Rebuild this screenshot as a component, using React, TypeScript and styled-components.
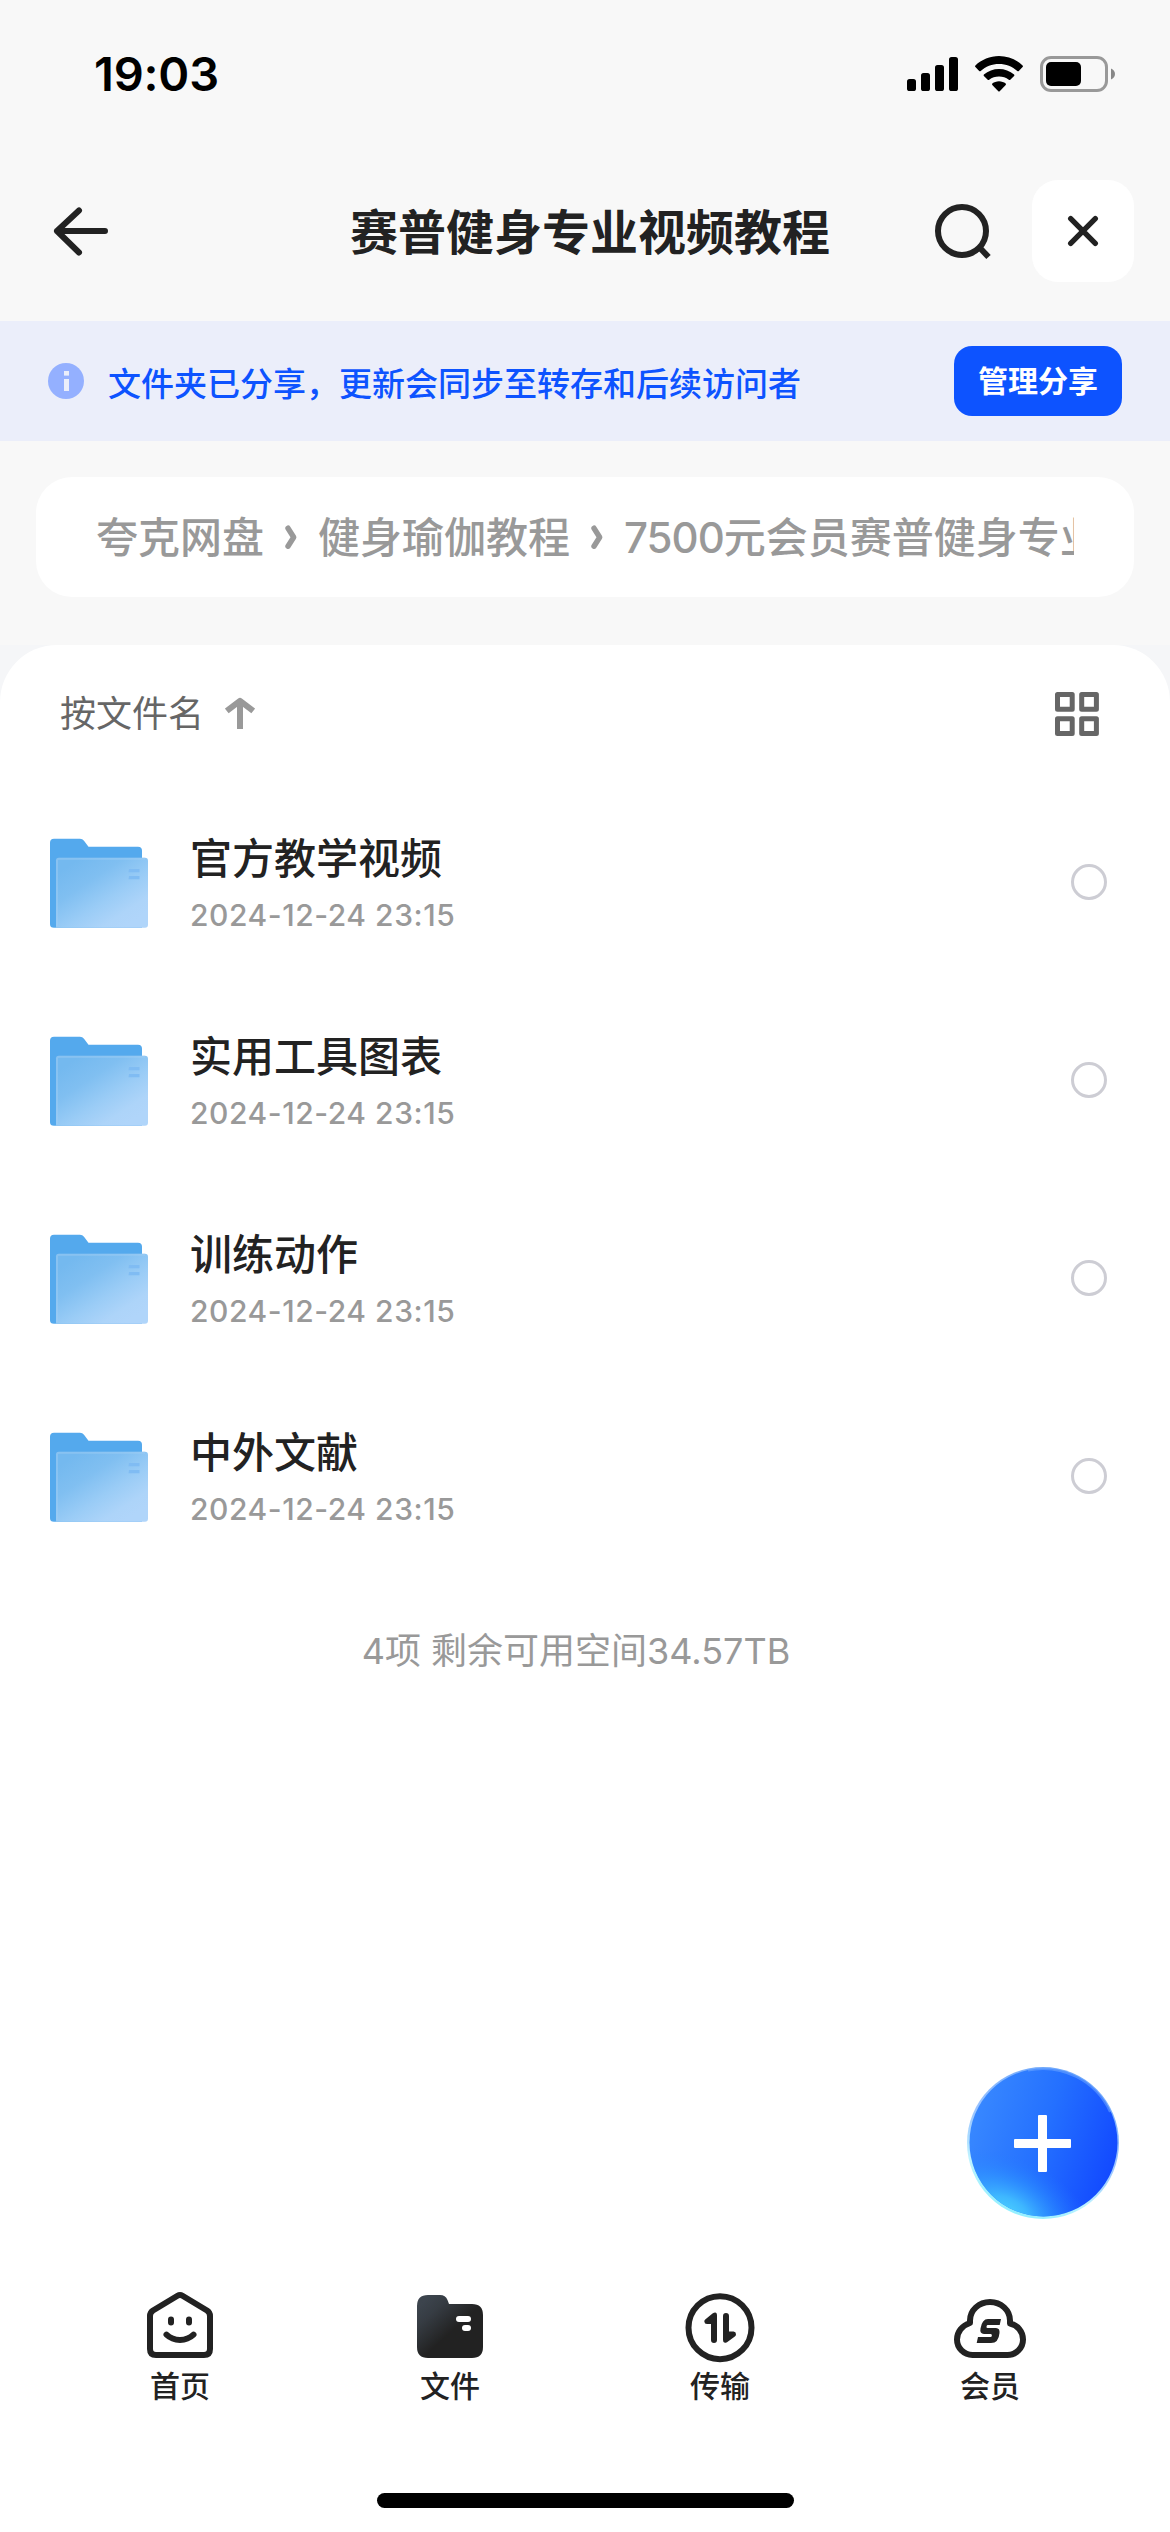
import React from "react";
import styled, { createGlobalStyle } from "styled-components";

const GlobalStyle = createGlobalStyle`
  html, body { margin: 0; padding: 0; background: #fff; }
  * { box-sizing: border-box; }
  button { border: 0; padding: 0; background: none; font: inherit; color: inherit; }
  svg { display: block; flex: none; }
`;

const Screen = styled.div`
  position: relative;
  display: flex;
  flex-direction: column;
  width: 1170px;
  height: 2532px;
  overflow: hidden;
  background: #f8f8f8;
  color: #222;
  font-family: Inter, "Noto Sans CJK SC", sans-serif;
`;

const StatusBar = styled.div`
  display: flex;
  align-items: center;
  height: 141px;
  padding: 7px 54px 0 94px;
`;

const Clock = styled.div`
  flex: 1;
  font-size: 47px;
  line-height: 60px;
  font-weight: 600;
  letter-spacing: -0.2px;
  color: #000;
`;

const Header = styled.header`
  display: flex;
  align-items: center;
  height: 180px;
  padding: 0 36px 0 51px;
`;

const Title = styled.h1`
  flex: 1;
  margin: 0;
  padding: 3px 0 0 239px;
  font-size: 48px;
  line-height: 60px;
  font-weight: 700;
  white-space: nowrap;
`;

const IconButton = styled.button`
  display: flex;
  align-items: center;
  justify-content: center;
  width: 60px;
  height: 60px;
`;

const CloseButton = styled(IconButton)`
  width: 102px;
  height: 102px;
  margin-left: 39px;
  border-radius: 26px;
  background: #fff;
`;

const Notice = styled.div`
  display: flex;
  align-items: center;
  height: 120px;
  padding: 0 48px;
  background: #ebeefa;
`;

const NoticeText = styled.div`
  flex: 1;
  margin-left: 24px;
  padding-top: 5px;
  color: #0d53ff;
  font-size: 33px;
  line-height: 44px;
  font-weight: 500;
`;

const ManageButton = styled.button`
  width: 168px;
  height: 70px;
  padding-top: 1px;
  border-radius: 18px;
  background: #0d53ff;
  color: #fff;
  font-size: 30px;
  line-height: 69px;
  font-weight: 700;
`;

const Crumbs = styled.nav`
  display: flex;
  align-items: center;
  height: 120px;
  margin: 36px 36px 48px;
  padding: 0 60px;
  border-radius: 36px;
  background: #fff;
`;

const CrumbTrack = styled.div`
  display: flex;
  align-items: center;
  flex: 1;
  overflow: hidden;
  color: #999;
  font-size: 42px;
  line-height: 60px;
  font-weight: 500;
  white-space: nowrap;
`;

const Crumb = styled.span`
  flex: none;
  padding-top: 2px;
`;

const Digits = styled.span`
  letter-spacing: -1px;
`;

const CrumbArrow = styled.svg`
  margin: 0 18px;
`;

const SheetBackdrop = styled.div`
  display: flex;
  flex: 1;
  background: #f5f6f8;
`;

const Sheet = styled.main`
  display: flex;
  flex-direction: column;
  flex: 1;
  border-radius: 57px 57px 0 0;
  background: #fff;
`;

const SortBar = styled.div`
  display: flex;
  align-items: center;
  height: 138px;
  padding: 0 71px 0 60px;
`;

const SortLabel = styled.span`
  color: #666;
  font-size: 36px;
  line-height: 48px;
  font-weight: 400;
`;

const SortArrow = styled.svg`
  margin: 0 auto 0 21px;
`;

const FileRow = styled.div`
  display: flex;
  align-items: center;
  height: 198px;
  padding: 0 63px 0 48px;
`;

const FileInfo = styled.div`
  display: flex;
  flex-direction: column;
  flex: 1;
  margin-left: 40px;
`;

const FileName = styled.div`
  padding-top: 1px;
  font-size: 42px;
  line-height: 56px;
  font-weight: 500;
`;

const FileDate = styled.div`
  color: #999;
  font-size: 30px;
  line-height: 40px;
  margin-top: 8px;
  letter-spacing: 0.55px;
  font-weight: 450;
`;

const Radio = styled.span`
  width: 36px;
  height: 36px;
  border: 3px solid #cdcdd4;
  border-radius: 50%;
`;

const Summary = styled.div`
  margin-top: 52px;
  padding-right: 18px;
  text-align: center;
  color: #999;
  font-size: 36px;
  line-height: 48px;
`;

const TabBar = styled.nav`
  display: flex;
  margin-top: auto;
  padding: 0 45px;
  height: 209px;
`;

const Tab = styled.button`
  display: flex;
  flex-direction: column;
  align-items: center;
  justify-content: flex-start;
  width: 270px;
  height: 122px;
  font-size: 30px;
  line-height: 40px;
  font-weight: 500;
`;

const TabLabel = styled.span`
  margin-top: 2px;
`;

const HomeIndicator = styled.div`
  width: 417px;
  height: 15px;
  margin: 0 auto 24px;
  border-radius: 8px;
  background: #000;
`;

const AddButton = styled.button`
  position: absolute;
  left: 966px;
  top: 2066px;
  width: 154px;
  height: 154px;
`;

const Signal = () => (
  <svg width="51" height="36" viewBox="0 0 51 36">
    <rect x="0" y="23" width="9" height="12" rx="2.6" />
    <rect x="14" y="17" width="9" height="18" rx="2.6" />
    <rect x="28" y="9" width="9" height="26" rx="2.6" />
    <rect x="42" y="1" width="9" height="34" rx="2.6" />
  </svg>
);

const WifiGlyph = styled.svg`
  margin: 0 17px;
`;

const Wifi = () => (
  <WifiGlyph width="48" height="36" viewBox="0 0 48 36">
    <path d="M24 0C33 0 41.500 3.600 47.600 9.400Q48.300 10.200 47.600 11L43.800 15Q43.100 15.600 42.300 15C37.400 10.500 31 8 24 8S10.600 10.500 5.700 15Q4.900 15.600 4.200 15L.4 11Q-.3 10.200 .4 9.400C6.500 3.600 15 0 24 0Z" />
    <path d="M24 13C29.600 13 35 15 39.100 18.600Q39.800 19.300 39.100 20L35.300 23.800Q34.600 24.400 33.800 23.800C31.100 21.600 27.700 20.500 24 20.500S16.900 21.600 14.200 23.800Q13.400 24.400 12.700 23.800L8.900 20Q8.200 19.300 8.900 18.600C13 15 18.400 13 24 13Z" />
    <path d="M24 25.300C26.600 25.300 28.900 26.200 30.700 27.600Q31.300 28.300 30.700 29L24.700 35.200Q24 35.900 23.300 35.200L17.300 29Q16.700 28.300 17.300 27.600C19.100 26.200 21.400 25.300 24 25.300Z" />
  </WifiGlyph>
);

const Battery = () => (
  <svg width="76" height="36" viewBox="0 0 76 36">
    <rect x="1.500" y="1.500" width="65" height="33" rx="9.500" fill="none" stroke="#999" strokeWidth="3" />
    <rect x="6" y="6" width="35" height="24" rx="5" />
    <path d="M71 12.500C73.500 13.500 75 15.500 75 18S73.500 22.500 71 23.500Z" fill="#888" />
  </svg>
);

const BackIcon = () => (
  <svg width="60" height="60" viewBox="0 0 60 60" fill="none" stroke="#222" strokeWidth="6" strokeLinecap="round" strokeLinejoin="round">
    <path d="M28 9.500L6 30L28 51.500M6 30H54" />
  </svg>
);

const SearchIcon = () => (
  <svg width="60" height="60" viewBox="0 0 60 60" fill="none" stroke="#222" strokeWidth="6">
    <circle cx="29" cy="30" r="24" />
    <path d="M47 47L55.500 56" />
  </svg>
);

const CloseIcon = () => (
  <svg width="36" height="36" viewBox="0 0 36 36" fill="none" stroke="#222" strokeWidth="5.400" strokeLinecap="round">
    <path d="M5.700 5.700L30.300 30.300M30.300 5.700L5.700 30.300" />
  </svg>
);

const InfoIcon = () => (
  <svg width="36" height="36" viewBox="0 0 36 36">
    <circle cx="18" cy="18" r="18" fill="#94b0ff" />
    <rect x="16" y="8" width="5" height="4.600" fill="#ebeefa" />
    <rect x="16" y="16" width="5" height="12" fill="#ebeefa" />
  </svg>
);

const ChevronIcon = () => (
  <CrumbArrow width="18" height="26" viewBox="0 0 18 26" fill="none" stroke="#999" strokeWidth="5.400" strokeLinecap="round" strokeLinejoin="round">
    <path d="M6 4.200L11.700 13.200L6 22.200" />
  </CrumbArrow>
);

const SortIcon = () => (
  <SortArrow width="30" height="34" viewBox="0 0 30 34" fill="none" stroke="#999" strokeWidth="6" strokeLinejoin="round">
    <path d="M1.800 14L15 3.800L28.200 14M15 4V32" />
  </SortArrow>
);

const GridIcon = () => (
  <svg width="44" height="44" viewBox="0 0 44 44" fill="none" stroke="#666" strokeWidth="5" strokeLinejoin="round">
    <path d="M2.500 2.500H17.200V17.200H2.500ZM26.700 2.500H41.400V17.200H26.700ZM2.500 26.700H17.200V41.400H2.500ZM26.700 26.700H41.400V41.400H26.700Z" />
  </svg>
);

const FolderIcon = () => (
  <svg width="102" height="94" viewBox="0 -1.200 102 94">
    <defs>
      <linearGradient id="folderFront" x1=".15" y1=".1" x2=".85" y2=".9">
        <stop offset="0" stopColor="#74b9ef" />
        <stop offset=".3" stopColor="#80bff1" />
        <stop offset=".6" stopColor="#9accf6" />
        <stop offset=".85" stopColor="#add4f9" />
        <stop offset="1" stopColor="#b0d5fa" />
      </linearGradient>
    </defs>
    <path d="M2 6.500Q2 2.500 6 2.500H32Q34.500 2.500 36 4.500L40.500 10.500H90Q94 10.500 94 14.500V91.500H6Q2 91.500 2 88Z" fill="#54a9ed" />
    <path d="M8 24Q8 21.500 10.500 21.500H97Q100 21.500 100 24.500V88.500Q100 91.500 97 91.500H8Z" fill="url(#folderFront)" />
    <path d="M9 90V24.500Q9 22.500 11 22.500H97" fill="none" stroke="#a2cff5" strokeWidth="2" opacity=".45" />
    <path d="M81 32.800H91.500V36H80.500ZM81 39.800H91.500V43H80.500Z" fill="#80bcf3" />
  </svg>
);

const AddIcon = () => (
  <svg width="154" height="154" viewBox="0 0 154 154">
    <defs>
      <linearGradient id="addBase" x1="0" y1=".3" x2="1" y2=".62">
        <stop offset="0" stopColor="#3989ff" />
        <stop offset=".5" stopColor="#2470ff" />
        <stop offset="1" stopColor="#1249ff" />
      </linearGradient>
      <radialGradient id="addGlow" gradientUnits="userSpaceOnUse" cx="0" cy="0" r="1" gradientTransform="translate(40 146) rotate(24) scale(92 56)">
        <stop offset="0" stopColor="#4bd0ff" />
        <stop offset=".25" stopColor="#41bfff" stopOpacity=".9" />
        <stop offset=".6" stopColor="#2f9bff" stopOpacity=".5" />
        <stop offset="1" stopColor="#2478ff" stopOpacity="0" />
      </radialGradient>
      <linearGradient id="addRim" x1=".7" y1="0" x2=".3" y2="1">
        <stop offset="0" stopColor="#6ba5fa" />
        <stop offset=".45" stopColor="#6faaff" stopOpacity=".7" />
        <stop offset=".75" stopColor="#c0f3ff" />
        <stop offset="1" stopColor="#8cefff" />
      </linearGradient>
    </defs>
    <circle cx="77" cy="77" r="76" fill="url(#addRim)" />
    <circle cx="77.500" cy="76.400" r="74" fill="url(#addBase)" />
    <circle cx="77.500" cy="76.400" r="74" fill="url(#addGlow)" />
    <path d="M62 4.500A74 74 0 0 1 144 46" fill="none" stroke="#76adff" strokeWidth="2" opacity=".5" />
    <rect x="48" y="73" width="57" height="9" rx="1" fill="#fff" />
    <rect x="72" y="49" width="9" height="57" rx="1" fill="#fff" />
  </svg>
);

const HomeIcon = () => (
  <svg width="80" height="80" viewBox="0 0 80 80" fill="none" stroke="#222" strokeWidth="6" strokeLinecap="round" strokeLinejoin="round">
    <path d="M37.500 11.800Q40 10.300 42.500 11.800L67 26.500Q70 28.500 70 32V65Q70 71 64 71H16Q10 71 10 65V32Q10 28.500 13 26.500Z" />
    <path d="M31 35.500V38.500M49 35.500V38.500" />
    <path d="M26.500 50.700Q32 56 40 56T53.500 50.700" />
  </svg>
);

const FilesIcon = () => (
  <svg width="80" height="80" viewBox="0 0 80 80">
    <defs>
      <linearGradient id="filesFill" x1=".08" y1=".12" x2=".52" y2=".58">
        <stop offset="0" stopColor="#3c444d" />
        <stop offset=".35" stopColor="#363c43" />
        <stop offset="1" stopColor="#222" />
      </linearGradient>
    </defs>
    <path d="M7 22Q7 11 18 11H30Q35.500 11 37.500 16L39 20H62Q73 20 73 31V63Q73 74 62 74H18Q7 74 7 63Z" fill="url(#filesFill)" />
    <rect x="46" y="32" width="15" height="6" rx="3" fill="#fff" />
    <rect x="52" y="41" width="9" height="6" rx="3" fill="#fff" />
  </svg>
);

const TransferIcon = () => (
  <svg width="80" height="80" viewBox="0 0 80 80">
    <circle cx="40" cy="43.700" r="31.500" fill="none" stroke="#222" strokeWidth="6" />
    <path d="M37 31.500V56Q37 59 34 59T31 56V40H27Q24.500 40 24.300 37.500Q24.200 36 25.500 35.200L32.500 29.500Q37 27 37 31.500Z" fill="#222" />
    <path d="M43 56V32Q43 29 46 29T49 32V47.500H53.500Q56 47.800 56 50.200Q56 51.700 54.500 52.800L47 58.200Q43 60 43 56Z" fill="#222" />
  </svg>
);

const MemberIcon = () => (
  <svg width="80" height="80" viewBox="0 0 80 80">
    <path d="M20 39V36.500A20 18.500 0 0 1 60 36.500V39.500C67.500 41 73 47.500 73 55.500A15.500 15.500 0 0 1 57.500 71H22.500A15.500 15.500 0 0 1 7 55.500C7 48 12 41.500 20 39Z" fill="none" stroke="#222" strokeWidth="6" strokeLinejoin="round" />
    <path d="M51 35L49.700 41H37.500Q36.700 41 36.500 42.500Q36.300 44 37.500 44H46Q50 44.200 49.500 49Q48.700 59 41 59H26.700L28 53H40.500Q41.700 53 41.900 51.500Q42 50 40.800 50H34Q29.500 49.500 30.500 44.500Q32 35 38 35Z" fill="#222" />
  </svg>
);

const files = ["官方教学视频", "实用工具图表", "训练动作", "中外文献"];

const tabs = [
  { label: "首页", Icon: HomeIcon },
  { label: "文件", Icon: FilesIcon },
  { label: "传输", Icon: TransferIcon },
  { label: "会员", Icon: MemberIcon },
];

export default function App() {
  return (
    <>
      <GlobalStyle />
      <Screen>
        <StatusBar>
          <Clock>19:03</Clock>
          <Signal />
          <Wifi />
          <Battery />
        </StatusBar>
        <Header>
          <IconButton aria-label="返回"><BackIcon /></IconButton>
          <Title>赛普健身专业视频教程</Title>
          <IconButton aria-label="搜索"><SearchIcon /></IconButton>
          <CloseButton aria-label="关闭"><CloseIcon /></CloseButton>
        </Header>
        <Notice>
          <InfoIcon />
          <NoticeText>文件夹已分享，更新会同步至转存和后续访问者</NoticeText>
          <ManageButton>管理分享</ManageButton>
        </Notice>
        <Crumbs>
          <CrumbTrack>
            <Crumb>夸克网盘</Crumb>
            <ChevronIcon />
            <Crumb>健身瑜伽教程</Crumb>
            <ChevronIcon />
            <Crumb><Digits>7500</Digits>元会员赛普健身专业</Crumb>
          </CrumbTrack>
        </Crumbs>
        <SheetBackdrop>
          <Sheet>
            <SortBar>
              <SortLabel>按文件名</SortLabel>
              <SortIcon />
              <GridIcon />
            </SortBar>
            {files.map((name) => (
              <FileRow key={name}>
                <FolderIcon />
                <FileInfo>
                  <FileName>{name}</FileName>
                  <FileDate>2024-12-24 23:15</FileDate>
                </FileInfo>
                <Radio />
              </FileRow>
            ))}
            <Summary>4项 剩余可用空间34.57TB</Summary>
            <TabBar>
              {tabs.map(({ label, Icon }) => (
                <Tab key={label}>
                  <Icon />
                  <TabLabel>{label}</TabLabel>
                </Tab>
              ))}
            </TabBar>
            <HomeIndicator />
          </Sheet>
        </SheetBackdrop>
        <AddButton aria-label="添加"><AddIcon /></AddButton>
      </Screen>
    </>
  );
}
